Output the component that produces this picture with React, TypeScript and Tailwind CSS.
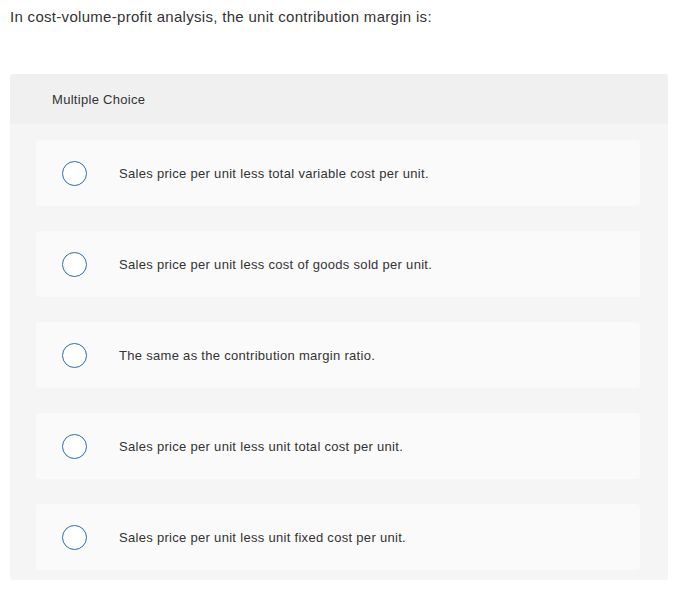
const options = [
  "Sales price per unit less total variable cost per unit.",
  "Sales price per unit less cost of goods sold per unit.",
  "The same as the contribution margin ratio.",
  "Sales price per unit less unit total cost per unit.",
  "Sales price per unit less unit fixed cost per unit.",
];

export default function App() {
  return (
    <div className="min-h-[591px] bg-white font-['Liberation_Sans',Arial,sans-serif] text-[#333]">
      <p className="px-[10px] pt-[7px] text-[15px] leading-[20px] tracking-[0.3px]">
        In cost-volume-profit analysis, the unit contribution margin is:
      </p>

      <div className="ml-[10px] mr-[19px] mt-[47px] rounded-[3px] bg-[#f5f5f5]">
        <div className="flex h-[50px] items-center rounded-t-[3px] bg-[#f0f0f0] pl-[42px] pt-[1px] text-[13px] tracking-[0.3px]">
          Multiple Choice
        </div>
        <div className="flex flex-col gap-[25px] pb-[10px] pl-[26px] pr-[28px] pt-[16px]">
          {options.map((opt) => (
            <label
              key={opt}
              className="flex h-[66px] cursor-pointer items-center rounded-[4px] bg-[#fafafa] pl-[26px]"
            >
              <span className="h-[25px] w-[25px] shrink-0 rounded-full border-[1.5px] border-[#2b6cb0] bg-white" />
              <span className="ml-[32px] pt-[1px] text-[13px] tracking-[0.3px]">{opt}</span>
            </label>
          ))}
        </div>
      </div>
    </div>
  );
}
